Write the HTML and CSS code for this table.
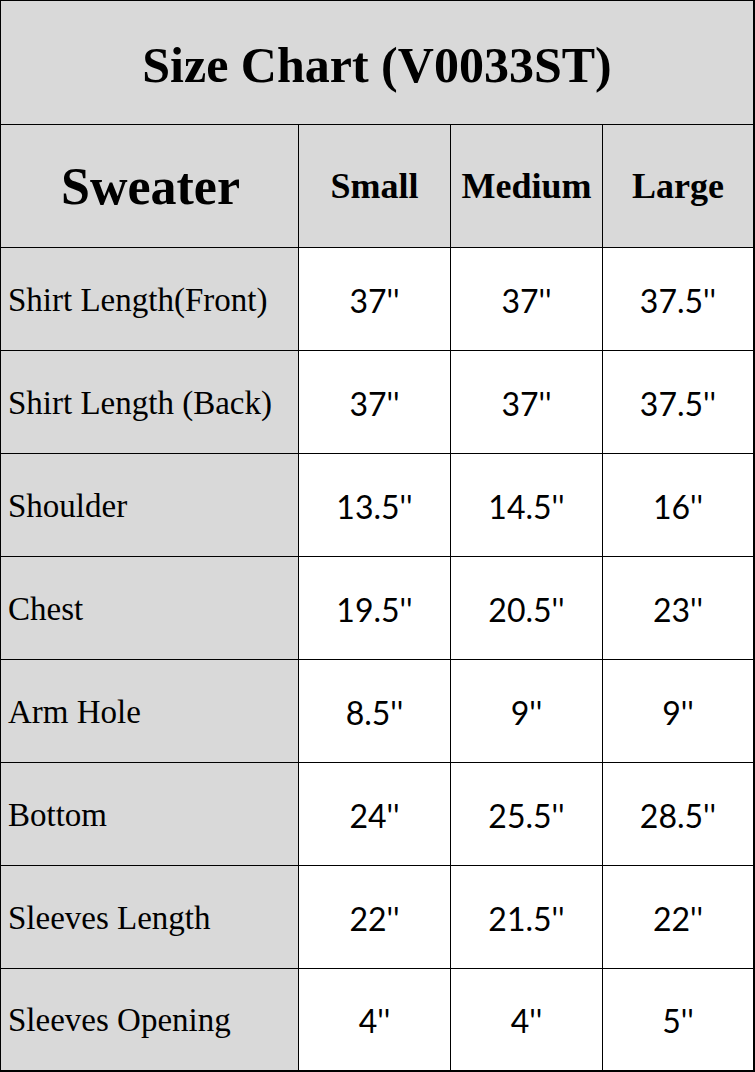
FILE: index.html
```html
<!DOCTYPE html>
<html lang="en">
<head>
<meta charset="utf-8">
<title>Size Chart (V0033ST)</title>
<link rel="stylesheet" href="styles.css">
</head>
<body>
<div class="chart">
  <div class="cell title">Size Chart (V0033ST)</div>

  <div class="cell head main">Sweater</div>
  <div class="cell head">Small</div>
  <div class="cell head">Medium</div>
  <div class="cell head end">Large</div>

  <div class="cell label">Shirt Length(Front)</div>
  <div class="cell val">37''</div><div class="cell val">37''</div><div class="cell val end">37.5''</div>

  <div class="cell label">Shirt Length (Back)</div>
  <div class="cell val">37''</div><div class="cell val">37''</div><div class="cell val end">37.5''</div>

  <div class="cell label">Shoulder</div>
  <div class="cell val">13.5''</div><div class="cell val">14.5''</div><div class="cell val end">16''</div>

  <div class="cell label">Chest</div>
  <div class="cell val">19.5''</div><div class="cell val">20.5''</div><div class="cell val end">23''</div>

  <div class="cell label">Arm Hole</div>
  <div class="cell val">8.5''</div><div class="cell val">9''</div><div class="cell val end">9''</div>

  <div class="cell label">Bottom</div>
  <div class="cell val">24''</div><div class="cell val">25.5''</div><div class="cell val end">28.5''</div>

  <div class="cell label">Sleeves Length</div>
  <div class="cell val">22''</div><div class="cell val">21.5''</div><div class="cell val end">22''</div>

  <div class="cell label last">Sleeves Opening</div>
  <div class="cell val last">4''</div><div class="cell val last">4''</div><div class="cell val last end">5''</div>
</div>
</body>
</html>
```

FILE: styles.css
```css
html, body {
  margin: 0;
  padding: 0;
  background: #ffffff;
}

.chart {
  width: 755px;
  height: 1072px;
  box-sizing: border-box;
  display: grid;
  grid-template-columns: 298px 152px 152px 152px;
  grid-template-rows: 124px 123px repeat(8, 103px);
  border-top: 1px solid #000;
  border-left: 1px solid #000;
  color: #000;
}

.cell {
  box-sizing: border-box;
  border-right: 1px solid #000;
  border-bottom: 1px solid #000;
  display: flex;
  align-items: center;
  justify-content: center;
  white-space: nowrap;
}

.title {
  grid-column: 1 / 5;
  background: #d9d9d9;
  font-family: "Liberation Serif", "Times New Roman", serif;
  font-weight: bold;
  font-size: 50px;
  border-right-width: 2px;
  padding-top: 4px;
}

.head {
  background: #d9d9d9;
  font-family: "Liberation Serif", "Times New Roman", serif;
  font-weight: bold;
  font-size: 36px;
}

.head.main {
  font-size: 52px;
  padding-left: 2px;
}

.label {
  background: #d9d9d9;
  justify-content: flex-start;
  padding-left: 7px;
  padding-top: 2px;
  font-family: "Liberation Serif", "Times New Roman", serif;
  font-size: 33px;
}

.val {
  background: #ffffff;
  font-family: Lato, "Liberation Sans", sans-serif;
  font-size: 32px;
  padding-top: 2px;
}

.end {
  border-right-width: 2px;
}

.last {
  border-bottom-width: 2px;
}
```
